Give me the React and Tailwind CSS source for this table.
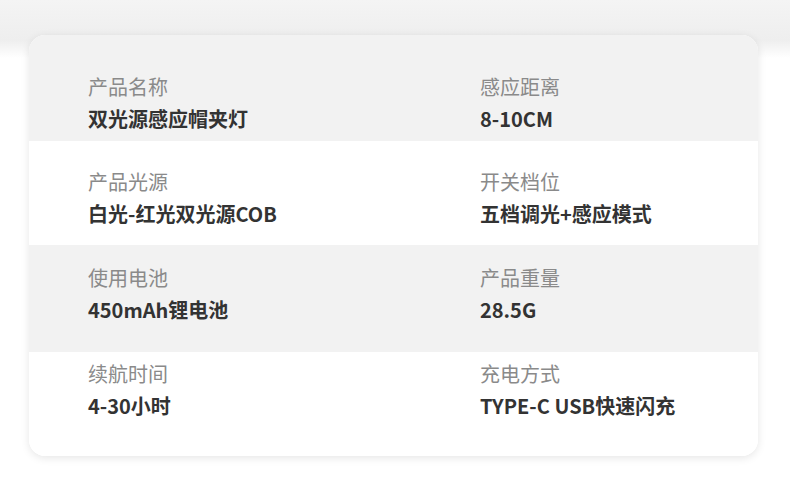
const specs = [
  {
    left: ["产品名称", "双光源感应帽夹灯"],
    right: ["感应距离", "8-10CM"],
    bg: "bg-[#f2f2f2]",
    box: "h-[106px] pt-[36px]",
  },
  {
    left: ["产品光源", "白光-红光双光源COB"],
    right: ["开关档位", "五档调光+感应模式"],
    bg: "bg-white",
    box: "h-[104px] pt-[25px]",
  },
  {
    left: ["使用电池", "450mAh锂电池"],
    right: ["产品重量", "28.5G"],
    bg: "bg-[#f2f2f2]",
    box: "h-[107px] pt-[17px]",
  },
  {
    left: ["续航时间", "4-30小时"],
    right: ["充电方式", "TYPE-C USB快速闪充"],
    bg: "bg-white",
    box: "h-[104px] pt-[6px]",
  },
];

function Cell({ label, value }) {
  return (
    <div className="flex flex-col">
      <span className="text-[20px] leading-[32px] text-[#8a8a8a]">{label}</span>
      <span className="text-[20px] leading-[32px] font-bold text-[#333333]">{value}</span>
    </div>
  );
}

export default function App() {
  return (
    <div
      className="w-[790px] h-[490px] pt-[35px] pl-[29px] bg-[linear-gradient(to_bottom,#f4f4f4_0px,#eeeeee_40px,#ffffff_58px)]"
      style={{ fontFamily: '"Noto Sans CJK SC", "Noto Sans", sans-serif' }}
    >
      <div className="w-[729px] rounded-[16px] overflow-hidden bg-white shadow-[0_2px_8px_rgba(0,0,0,0.10)]">
        {specs.map((row, i) => (
          <div
            key={i}
            className={`grid grid-cols-[392px_1fr] pl-[59px] ${row.bg} ${row.box}`}
          >
            <Cell label={row.left[0]} value={row.left[1]} />
            <Cell label={row.right[0]} value={row.right[1]} />
          </div>
        ))}
      </div>
    </div>
  );
}
